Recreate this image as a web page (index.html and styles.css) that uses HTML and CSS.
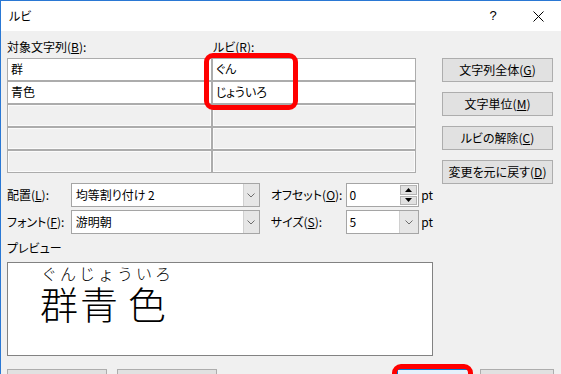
FILE: index.html
```html
<!DOCTYPE html>
<html lang="ja">
<head>
<meta charset="utf-8">
<title>ルビ</title>
<link rel="stylesheet" href="styles.css">
</head>
<body>
<div class="dialog">
  <div class="titlebar">
    <span class="title">ルビ</span>
    <span class="tb-btn help">?</span>
    <span class="tb-btn close">
      <svg width="11" height="11" viewBox="0 0 11 11"><path d="M0.5 0.5 L10.5 10.5 M10.5 0.5 L0.5 10.5" stroke="#000" stroke-width="1" fill="none"/></svg>
    </span>
  </div>
  <div class="main">
    <div class="left">
      <div class="labels">
        <span class="lbl-b">対象文字列(<u>B</u>):</span>
        <span class="lbl-r">ルビ(<u>R</u>):</span>
      </div>
      <div class="grid">
        <div class="cell">群</div><div class="cell">ぐん</div>
        <div class="cell">青色</div><div class="cell">じょういろ</div>
        <div class="cell empty"></div><div class="cell empty"></div>
        <div class="cell empty"></div><div class="cell empty"></div>
        <div class="cell empty"></div><div class="cell empty"></div>
      </div>
      <div class="row first">
        <span class="flabel">配置(<u>L</u>):</span>
        <div class="combo wide">
          <span class="val">均等割り付け 2</span>
          <span class="drop"><svg width="8" height="5" viewBox="0 0 8 5"><path d="M0.5 0.5 L4 4 L7.5 0.5" stroke="#6d6d6d" fill="none"/></svg></span>
        </div>
        <span class="rlabel">オフセット(<u>O</u>):</span>
        <div class="combo narrow">
          <span class="val">0</span>
          <span class="spin">
            <span class="sbtn up"><svg width="7" height="4" viewBox="0 0 7 4"><path d="M0 4 L3.5 0 L7 4 Z" fill="#000"/></svg></span>
            <span class="sbtn down"><svg width="7" height="4" viewBox="0 0 7 4"><path d="M0 0 L3.5 4 L7 0 Z" fill="#000"/></svg></span>
          </span>
        </div>
        <span class="pt">pt</span>
      </div>
      <div class="row">
        <span class="flabel">フォント(<u>F</u>):</span>
        <div class="combo wide">
          <span class="val">游明朝</span>
          <span class="drop"><svg width="8" height="5" viewBox="0 0 8 5"><path d="M0.5 0.5 L4 4 L7.5 0.5" stroke="#6d6d6d" fill="none"/></svg></span>
        </div>
        <span class="rlabel">サイズ(<u>S</u>):</span>
        <div class="combo narrow">
          <span class="val">5</span>
          <span class="drop big"><svg width="8" height="5" viewBox="0 0 8 5"><path d="M0.5 0.5 L4 4 L7.5 0.5" stroke="#6d6d6d" fill="none"/></svg></span>
        </div>
        <span class="pt">pt</span>
      </div>
      <div class="plabel">プレビュー</div>
      <div class="preview">
        <div class="rubyline">
          <span class="rc r1">ぐ</span><span class="rc">ん</span><span class="rc">じ</span><span class="rc">ょ</span><span class="rc">う</span><span class="rc">い</span><span class="rc">ろ</span>
        </div>
        <div class="baseline">
          <span class="bc b1">群</span><span class="bc b2">青</span><span class="bc b3">色</span>
        </div>
      </div>
    </div>
    <div class="side">
      <button class="btn">文字列全体(<u>G</u>)</button>
      <button class="btn">文字単位(<u>M</u>)</button>
      <button class="btn">ルビの解除(<u>C</u>)</button>
      <button class="btn">変更を元に戻す(<u>D</u>)</button>
    </div>
  </div>
  <div class="bottom">
    <button class="btn bb1"></button>
    <button class="btn bb2"></button>
    <button class="btn bb3 default"></button>
    <button class="btn bb4"></button>
  </div>
  <div class="mark mark1"></div>
  <div class="mark mark2"></div>
</div>
</body>
</html>
```

FILE: styles.css
```css
* { box-sizing: border-box; }
html, body { margin: 0; padding: 0; }
body {
  width: 561px;
  height: 374px;
  overflow: hidden;
  background: #f0f0f0;
  font-family: "Noto Sans CJK JP", "Noto Sans", sans-serif;
  font-size: 12px;
  line-height: 16px;
  color: #000;
  font-feature-settings: "palt";
}
u { text-decoration: underline; text-underline-offset: 1px; }

.dialog {
  position: relative;
  height: 374px;
  border-left: 1px solid #2a78d4;
  border-top: 1px solid #2a78d4;
  background: #f0f0f0;
  overflow: hidden;
}

.titlebar {
  height: 30px;
  background: #fff;
  display: flex;
  align-items: center;
  padding-left: 8px;
}
.title { flex: 1; }
.tb-btn {
  height: 30px;
  display: flex;
  align-items: center;
  justify-content: center;
}
.help { width: 46px; font-family: "Liberation Sans", sans-serif; font-size: 13px; }
.close { width: 45px; }

.main {
  display: flex;
  padding: 8px 0 0 6px;
}
.left { width: 426px; }

.labels { display: flex; height: 16px; }
.lbl-b { width: 206px; }

.grid {
  margin-top: 3px;
  display: grid;
  grid-template-columns: 205px 204px;
  grid-auto-rows: 23px;
}
.cell {
  border: 1px solid #acacac;
  background: #fff;
  line-height: 20px;
  padding-left: 3px;
}
.cell.empty {
  background: #f0f0f0;
  box-shadow: inset 0 0 0 1px #fbfbfb;
}

.row {
  display: flex;
  align-items: center;
  height: 24px;
  margin-top: 3px;
}
.row.first { margin-top: 10px; }
.flabel { width: 64px; }
.rlabel { width: 75px; margin-left: 11px; }
.pt { margin-left: 2px; }

.combo {
  height: 24px;
  border: 1px solid #a5a5a5;
  background: #fff;
  display: flex;
}
.combo.wide { width: 190px; }
.combo.narrow { width: 74px; }
.combo .val {
  flex: 1;
  padding-left: 4px;
  line-height: 22px;
}
.combo.narrow .val { padding-left: 3px; }
.drop {
  width: 16px;
  background: #e6e6e6;
  border-left: 1px solid #d0d0d0;
  display: flex;
  align-items: center;
  justify-content: center;
}
.drop.big { width: 19px; }
.spin {
  width: 19px;
  display: flex;
  flex-direction: column;
  padding: 1px;
  gap: 1px;
}
.sbtn {
  flex: 1;
  background: #e1e1e1;
  border: 1px solid #b4b4b4;
  display: flex;
  align-items: center;
  justify-content: center;
}

.plabel { margin-top: 6px; }
.preview {
  margin-top: 6px;
  height: 94px;
  border: 1px solid #828282;
  background: #fff;
  padding-top: 1px;
  font-weight: 300;
  font-feature-settings: normal;
}
.rubyline {
  display: flex;
  gap: 3px;
  height: 18px;
  line-height: 18px;
  font-size: 16px;
}
.rc { width: 16px; text-align: center; }
.r1 { margin-left: 33px; }

.baseline {
  display: flex;
  margin-top: 3px;
  height: 36px;
  line-height: 36px;
  font-size: 38px;
}
.bc { width: 38px; text-align: center; }
.b1 { margin-left: 32px; }
.b2 { margin-left: 2px; }
.b3 { margin-left: 10px; }

.side {
  margin-left: 9px;
  padding-top: 19px;
  display: flex;
  flex-direction: column;
  gap: 10px;
}
.btn {
  font: inherit;
  font-feature-settings: "palt";
  color: #000;
  width: 111px;
  height: 24px;
  margin: 0;
  padding: 0;
  background: #e1e1e1;
  border: 1px solid #adadad;
  border-radius: 0;
  line-height: 20px;
}

.bottom {
  display: flex;
  margin-top: 13px;
  padding-left: 6px;
}
.bottom .btn { height: 23px; }
.bb1 { width: 100px; }
.bb2 { width: 100px; margin-left: 10px; }
.bb3 { width: 72px; margin-left: 180px; }
.bb4 { width: 74px; margin-left: 11px; }
.btn.default { background: #e5f1fb; border-color: #0078d7; }

.mark {
  position: absolute;
  border: 5px solid #f00;
  border-radius: 9px;
}
.mark1 { left: 203px; top: 52px; width: 94px; height: 57px; }
.mark2 { left: 391px; top: 363px; width: 81px; height: 30px; }
```
